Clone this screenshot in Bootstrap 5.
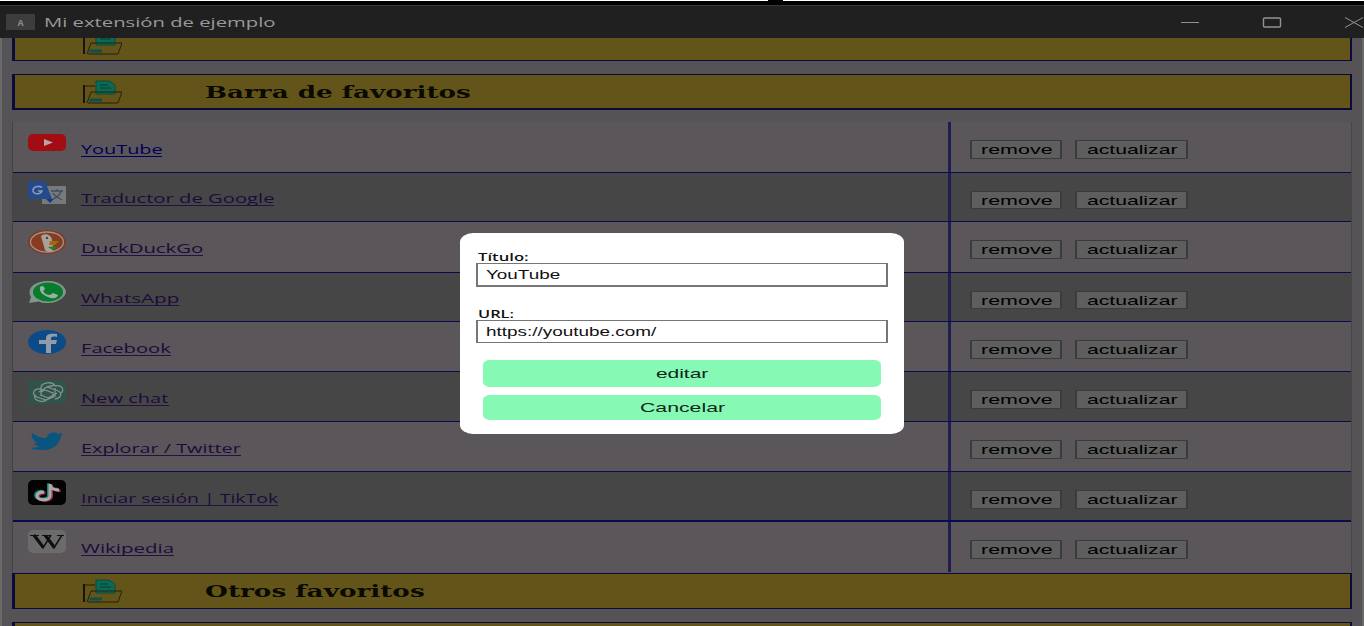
<!DOCTYPE html>
<html lang="es">
<head>
<meta charset="utf-8">
<meta name="viewport" content="width=device-width, initial-scale=1">
<title>Mi extensión de ejemplo</title>
<link href="https://cdn.jsdelivr.net/npm/bootstrap@5.3.0/dist/css/bootstrap.min.css" rel="stylesheet">
<style>
html,body{height:626px;overflow:hidden}
body{background:#555355;font-family:"Open Sans","Noto Sans",sans-serif;color:#000;line-height:1}
.topline{height:5px;background:#000;border-top:1px solid #fff;position:relative}
.topline i{position:absolute;left:768px;top:-1px;width:15px;height:1px;background:#000}
.titlebar{height:33px;background:#202020;border-top:1px solid #383838;color:#999;padding-left:6px}
.appicon{width:29px;height:16px;background:#3d3d3d;color:#888;font-size:9px;font-weight:700}
.fit{display:inline-block;white-space:nowrap;transform-origin:0 50%}
.slot{display:inline-block;flex:none;white-space:nowrap}
.titlebar .slot{font-size:13.5px;margin-left:9px;padding-top:1px}
.winbtns{margin-left:auto}
.page{height:588px;overflow:hidden;border-left:2px solid #6a6a6a;border-right:2px solid #696969;padding-left:10px;padding-right:10px}
.band{height:36px;background:#63551a;border:2px solid #0b0a3c;border-width:1px 2px 2px 3px;font-family:"DejaVu Serif",serif;font-weight:700;font-size:16px;color:#0a0a02}
.band svg{margin-left:68px;margin-right:83px;flex:none}
.band .slot{padding-top:2px}
.band.cut{height:23px;overflow:hidden;align-items:flex-end!important;border-top:0}
.band.thin{border-bottom-width:1px}
.marks{border-left:1px solid #434343;border-right:1px solid #484548}
.mk{border-bottom:1px solid #0b0a50;background:#5a5659}
.mk:nth-child(even){background:#464646}
.mk .site{width:938px;border-right:3px solid #1f1e50;padding-left:15px}
.mk .site svg{margin-top:8px;margin-right:15px;flex:none}
.mk a{color:#1c0b3c;text-decoration:none;font-size:13px;border-bottom:1px solid #251145;line-height:14px;display:block;margin-top:19px;height:15px}
.mk:nth-child(2) a,.mk:nth-child(4) a{margin-top:18px}
.mk:first-child a{color:#00005a;border-color:#00005a;margin-top:20px}
.mk .acts{padding:18px 0 0 19px;gap:13px}
.sbtn{height:19px;background:#5e5e5e;border:1px solid #3b3b3b;border-width:1px 2px;border-radius:1px;color:#000;font:13px "Liberation Sans",sans-serif;line-height:15px;padding:0 0 0 9px;text-align:left}
.mk:nth-child(2) .sbtn,.mk:nth-child(4) .sbtn{height:18px;line-height:13px}
.dlg{position:absolute;left:460px;top:233px;width:444px;height:201px;background:#fff;border-radius:13px/9px;padding:18px 16px 0 16px}
.dlg label{font-weight:600;font-size:10px;line-height:13px;height:12px;display:block;padding-left:2px;color:#111}
.field{height:24px;border:1px solid #767676;border-width:1px 2px 2px 2px;padding-left:8px;font:12.5px "Liberation Sans",sans-serif;line-height:23px;background:#fff;color:#111}
.gbtn{height:27px;background:#86f9b4;border-radius:7px/5px;border:0;margin:0 7px;font:13px "Liberation Sans",sans-serif;color:#10261a;line-height:24px;display:block;width:398px;padding:0;text-align:left}
</style>
</head>
<body>
<svg width="0" height="0" class="position-absolute">
<symbol id="folder" viewBox="0 0 39 24">
<path d="M13 14V1h13l6 4v9z" fill="#0b6a55" stroke="#0a4a3a"/>
<path d="M17 5h8M17 8h11" stroke="#063c34"/>
<path d="M1.500 23V6H12M5 23h30l4-11H8L4 23" fill="none" stroke="#25210c" stroke-width="1"/>
<path d="M1 5v18" stroke="#17150a" stroke-width="2"/>
<path d="M7 18.500h12v3H6z" fill="#0b514a"/>
</symbol>
</svg>
<div class="topline"><i></i></div>
<header class="titlebar d-flex align-items-center">
<span class="appicon d-flex align-items-center justify-content-center">A</span>
<span class="slot"><span class="fit" data-w="231">Mi extensión de ejemplo</span></span>
<svg class="winbtns" width="184" height="32" fill="none" stroke="#929292"><path d="M1 16.500h18"/><rect x="83.500" y="12" width="17" height="9" rx="1" stroke-width="1.400"/><path d="M165 11.500l18 10M183 11.500l-18 10"/></svg>
</header>
<main class="page">
<section class="band cut thin d-flex"><svg width="39" height="24" style="margin-bottom:5px"><use href="#folder"/></svg></section>
<section class="band d-flex align-items-center" style="margin:13px 0 12px"><svg width="39" height="24"><use href="#folder"/></svg><span class="slot"><span class="fit" data-w="265">Barra de favoritos</span></span></section>
<section class="marks" id="marks"></section>
<section class="band thin d-flex align-items-center" style="margin:1px 0 13px"><svg width="39" height="24"><use href="#folder"/></svg><span class="slot"><span class="fit" data-w="220">Otros favoritos</span></span></section>
<section class="band"></section>
</main>
<form class="dlg">
<label><span class="fit" data-w="50">Título:</span></label>
<div class="field"><span class="fit" data-w="74">YouTube</span></div>
<label style="margin-top:21px"><span class="fit" data-w="36">URL:</span></label>
<div class="field" style="height:23px;border-bottom-width:1px"><span class="fit" data-w="171">https://youtube.com/</span></div>
<button type="button" class="gbtn" style="margin-top:17px;padding-left:173px"><span class="fit" data-w="53">editar</span></button>
<button type="button" class="gbtn" style="margin-top:8px;height:25px;padding-left:157px"><span class="fit" data-w="85">Cancelar</span></button>
</form>
<script src="https://cdn.jsdelivr.net/npm/bootstrap@5.3.0/dist/js/bootstrap.bundle.min.js"></script>
<script>
const icons={
yt:'<rect y="4" width="38" height="17" rx="5" fill="#a10d12"/><path d="M16 9v7l9-3.500z" fill="#b9a5a5"/>',
tr:'<rect x="14" y="5" width="24" height="18" fill="#777a7d"/><path d="M0 0h17l7 18H0z" fill="#234a8c"/><path d="M18 18h8l-4 4z" fill="#173b78"/><path d="M14 6.500C10 4 5 6 5 9.500s7 5 9 .5h-4" fill="none" stroke="#8b98b0" stroke-width="1.600"/><path d="M23 10h12M29 8v2M33 10c-1 4-5 7-8 8M25 12c2 4 6 5 9 7" fill="none" stroke="#424e60" stroke-width="1.300"/>',
dd:'<ellipse cx="19" cy="12" rx="19" ry="12" fill="#803a27"/><ellipse cx="19" cy="12" rx="16.500" ry="10" fill="#863c21" stroke="#a19088" stroke-width="1.300"/><path d="M13 6c4-4 11-1 11 4l2 11c-4 2-7 1-9-1z" fill="#a7a09b"/><path d="M22 11h9l-4 4h-6z" fill="#a06a12"/><path d="M20 17l9-1-3 5z" fill="#3b702d"/><circle cx="19" cy="8" r="1" fill="#222"/>',
wa:'<path d="M1 22l2-6C-2 8 6 0 20 0s18 8 18 11-6 11-18 11q-6 0-9-1.500z" fill="#81958a"/><ellipse cx="20" cy="11" rx="15" ry="9.500" fill="#087c2d"/><path d="M12 6c2-2 4-1 5 2l-2 2c2 3 4 4 7 4l3-2 5 2c-1 4-6 4-10 2-5-2-9-5-8-10z" fill="#9bb0a2"/>',
fb:'<ellipse cx="19" cy="12" rx="19" ry="12" fill="#0c4b88"/><path d="M18 23V14h-7v-4h7V8c0-4 4-5 11-4v3c-5-1-6 0-6 2v1h6l-1 4h-5v9z" fill="#929ca7"/>',
ai:'<rect width="38" height="24" rx="4" fill="#30534b"/><g fill="none" stroke="#82938c" stroke-width="1.300"><path id="p" d="M13 16V8c0-6 12-7 14-2"/><path d="M13 9C5 8 3 15 9 17l9 3 9-4V8M8 15C3 18 12 24 19 20M11 12l8-5 9 3c7 2 6 8-1 9M13 15l7 3 9-5M27 6c8-2 9 5 6 7M19 7l8-2M17 10l8 3v5M17 10l-4 2"/></g>',
tw:'<path d="M4 3c4 3 9 5 15 5 0-5 7-7 11-4l5-1-2 3C32 14 25 20 15 20c-5 0-9 0-12-2 4 0 7-1 9-2-4 0-6-2-6-3h3C5 10 3 7 4 3z" fill="#0a5580"/>',
tt:'<rect width="38" height="25" rx="5" fill="#030303"/><g fill="none" stroke-width="3"><path d="M22 4c0 4 4 6 9 6M22 4v12c0 5-13 5-13 0 0-3 3-4 7-4" stroke="#177e7a" transform="translate(-1.500 -.7)"/><path d="M22 4c0 4 4 6 9 6M22 4v12c0 5-13 5-13 0 0-3 3-4 7-4" stroke="#9b3047" transform="translate(1.500 .7)"/><path d="M22 4c0 4 4 6 9 6M22 4v12c0 5-13 5-13 0 0-3 3-4 7-4" stroke="#aaa"/></g>',
wk:'<rect width="38" height="23" rx="5" fill="#6b6b6b"/><path d="M2 5.500h9M14 5.500h9M29 5.500h7" stroke="#111" stroke-width="1.200"/><path d="M5 5l10 13L23 5M16 5l10 13L34 5" fill="none" stroke="#101010" stroke-width="1.500"/><path d="M6 5l9 12M18 6l8 11" stroke="#101010" stroke-width="3"/>'};
const rows=[["yt","YouTube",81,51],["tr","Traductor de Google",193,49],["dd","DuckDuckGo",122,51],["wa","WhatsApp",98,49],["fb","Facebook",90,50],["ai","New chat",88,50],["tw","Explorar / Twitter",160,50],["tt","Iniciar sesión | TikTok",197,50],["wk","Wikipedia",93,50]];
document.getElementById("marks").innerHTML=rows.map(([k,t,w,h],i)=>`<div class="mk d-flex" style="height:${h}px;${i==7?"border-bottom-width:2px":i==8?"border-bottom:0":""}"><div class="site d-flex"><svg width="38" height="25">${icons[k]}</svg><a href="#" style="width:${w}px"><span class="fit" data-w="${w}">${t}</span></a></div><div class="acts d-flex align-items-start"><button class="sbtn" style="width:92px"><span class="fit" data-w="71">remove</span></button><button class="sbtn" style="width:113px;padding-left:10px"><span class="fit" data-w="91">actualizar</span></button></div></div>`).join("");
// stretch each label to its column width
document.querySelectorAll(".fit").forEach(e=>{e.style.transform=`scaleX(${e.dataset.w/e.offsetWidth})`});
</script>
</body>
</html>
